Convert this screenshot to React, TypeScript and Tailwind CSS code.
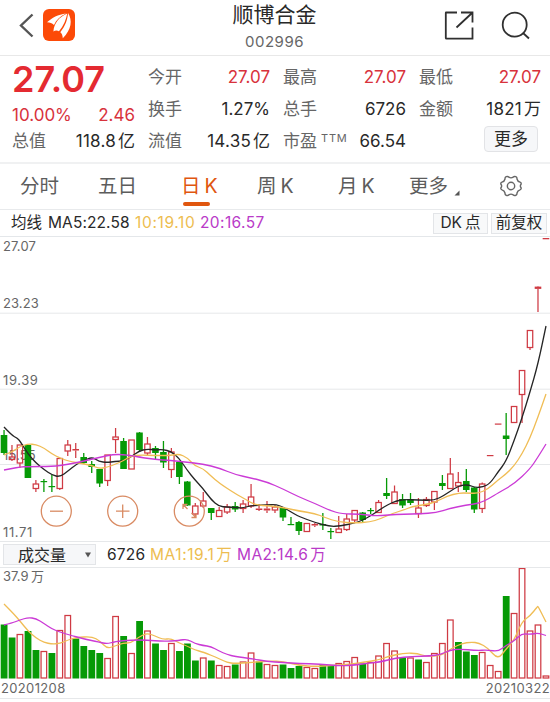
import React from 'react';

type Candle = [number, number, number, number, 'r' | 'g'];

const STEP = 7.97;
const RED = '#cf3a43';
const GREEN = '#069a06';
const px = (i: number) => 4 + i * STEP;

// high, body top, body bottom, low, direction
const candles: Candle[] = [
  [430, 435, 453, 455, 'g'], [445, 457, 459.5, 461, 'r'], [445, 445, 463, 468, 'r'], [445, 445, 478, 478, 'g'],
  [480, 484, 488.5, 492, 'r'], [479, 481, 482, 492, 'g'], [475, 486, 487, 492, 'g'], [458, 458.5, 488.5, 490, 'r'],
  [440, 445, 451, 456, 'r'], [443, 449, 450.5, 458, 'r'], [453, 457, 463, 464, 'g'], [461, 464, 467, 473, 'g'],
  [469, 469, 483.5, 487, 'g'], [455, 455, 480.5, 486, 'r'], [428, 437, 439.5, 453, 'r'], [438, 441, 469, 469, 'g'],
  [440, 440, 469, 469, 'r'], [432, 432.5, 450, 452, 'g'], [437, 444, 453, 455, 'r'], [446, 448, 453, 459, 'g'],
  [441, 452, 462.5, 468, 'g'], [448, 452, 469.5, 478, 'r'], [461, 462, 477, 484, 'g'], [481, 481.5, 505.5, 506, 'g'],
  [503, 506, 514, 518, 'r'], [492, 501, 506, 508, 'r'], [508, 508, 513, 520, 'g'], [507, 510.5, 516.5, 517, 'r'],
  [504, 507, 512, 514, 'r'], [502, 506, 509.5, 512, 'g'], [500, 504, 508.5, 513, 'r'], [484, 497, 506, 508, 'r'],
  [504, 508.5, 510, 511, 'r'], [501, 508.5, 510.5, 513, 'r'], [505, 507, 510, 513, 'r'], [508, 508, 517.5, 521, 'g'],
  [517, 524, 525, 525, 'g'], [521, 522, 531, 535, 'g'], [523, 523.5, 531.5, 532, 'r'], [523, 524, 525.5, 527, 'r'],
  [513, 524, 525.5, 530, 'g'], [528, 531, 532, 539, 'g'], [516, 529, 532.5, 533, 'r'], [514, 519, 529.5, 531, 'r'],
  [510, 510.5, 520, 523, 'r'], [512, 512.5, 520, 522, 'g'], [508, 510, 511, 514, 'g'], [500, 502.5, 512.5, 513, 'r'],
  [478, 493, 496, 499, 'g'], [485.5, 492, 503.5, 504, 'r'], [494, 499, 505.5, 508, 'g'], [493, 499, 503, 505, 'g'],
  [498, 508, 513.5, 518, 'r'], [497, 499.5, 505.5, 507, 'r'], [491, 491.5, 502, 510, 'r'], [475, 483, 486, 490, 'g'],
  [458, 474, 488.5, 489, 'r'], [472, 482.5, 486, 492, 'r'], [469, 481, 490, 492, 'g'], [487, 487.5, 509.5, 513, 'g'],
  [482.5, 484, 508.5, 513, 'r'], [455, 455, 456.2, 456.2, 'r'], [423.5, 423.5, 424.7, 424.7, 'r'], [413, 435.5, 439, 455, 'g'],
  [406, 406.5, 422.5, 423, 'r'], [370, 370.5, 394.5, 423, 'r'], [330, 330.5, 347.5, 350, 'r'], [286, 286.6, 288.9, 312, 'r'],
  [238, 238, 239.3, 239.3, 'r'],
];

const volumeTops = [
  625, 638, 634.5, 631.5, 650.5, 651.5, 653.5, 630.5, 615.5, 639, 646.5, 650.5, 653.5, 658.5, 616.5, 636.5, 653.5, 621.5,
  631, 644, 650.5, 643.5, 651.5, 644, 661, 658, 661, 665.5, 666.5, 665, 662, 653, 662, 664.5, 665.5, 665, 668.5, 666.5,
  667.5, 668.5, 665, 666, 663.5, 661.5, 657.5, 664, 662.5, 656, 643.5, 651, 658, 658, 660, 662.5, 653.5, 643.5, 620,
  642.5, 652, 655.5, 652.5, 665.5, 671.5, 596.5, 613.5, 568.5, 631, 625, 676,
];
const volumeDir = 'ggrgg rgrrg gggrr grgrg grggg rgrrg rrgrr gggrr ggrrr grrrr grgrr rrggg rrrgr rrrr'.replace(/ /g, '');

const ma5: number[][] = [[4, 427], [12, 435.5], [17, 438], [20, 441], [28, 454], [36, 463], [44, 469.5], [52, 475], [60, 477], [68, 471], [76, 464.5], [84, 460.5], [92, 457], [99, 461.5], [107, 462.5], [115, 461.5], [123, 461], [131, 457], [139, 451], [147, 449], [155, 450], [163, 449.5], [171, 451.5], [179, 458], [187, 470], [195, 480], [203, 488.5], [211, 499.5], [219, 506.5], [227, 507], [235, 507.5], [243, 508], [251, 505.5], [267, 505], [276, 504.5], [283, 507], [291, 512], [299, 516.5], [315, 522.5], [330, 526.5], [340, 526], [355, 523], [363, 520], [372, 515], [380, 509.5], [388, 504.5], [396, 501], [404, 499.5], [418, 500], [434, 500.5], [444, 495.5], [455, 488], [462, 485], [469, 485], [475, 487.5], [483, 487], [490, 483.5], [498, 472], [506, 461.5], [514, 441], [522, 418], [530, 392], [538, 364], [546, 326]];
const ma10: number[][] = [[4, 455], [12, 452], [20, 446.5], [28, 444], [36, 444.5], [44, 448], [52, 454], [60, 458], [68, 461], [84, 464], [92, 465.5], [99, 468.5], [107, 467.5], [123, 461], [131, 456], [139, 455], [155, 455.5], [171, 455.5], [179, 454], [187, 457.5], [195, 466], [203, 468.5], [211, 476], [219, 483], [235, 493.5], [245, 499], [255, 505], [270, 506], [283, 507.5], [299, 511], [315, 513.5], [325, 517.5], [338, 522], [355, 523], [370, 522], [380, 519], [392, 513.5], [404, 510], [412, 506.5], [424, 505], [436, 502], [447, 496], [459, 493], [468, 493], [478, 493.5], [488, 489], [498, 480], [506, 474], [514, 466], [522, 454], [530, 438], [538, 417], [546, 394]];
const ma20: number[][] = [[4, 470], [12, 468.5], [20, 467], [28, 466.5], [52, 466.5], [68, 464.5], [84, 461], [99, 457.5], [115, 454], [131, 455.5], [139, 457], [155, 459.5], [171, 460.5], [185, 462], [203, 464], [219, 468], [235, 474.5], [251, 478], [267, 482], [283, 489], [299, 497], [315, 503.5], [330, 510.5], [342, 514], [360, 514], [375, 516], [388, 515], [404, 514], [420, 514], [436, 512.5], [450, 508.5], [466, 505], [479, 503.5], [490, 498], [498, 493], [514, 484], [530, 469], [538, 457], [546, 444]];
const vol5: number[][] = [[4, 604], [12, 612], [20, 621], [28, 631], [36, 638], [44, 642.5], [52, 644], [60, 643.5], [68, 640], [76, 637.5], [92, 636.5], [100, 641], [107, 648.5], [115, 646], [123, 643], [131, 643], [139, 637], [147, 633], [155, 636], [163, 639.5], [171, 638.5], [179, 643], [187, 646], [195, 650], [203, 652], [219, 658.5], [227, 662.5], [235, 663.5], [250, 662.5], [270, 661], [283, 661.5], [300, 665.5], [315, 666.5], [330, 665.5], [350, 664.5], [368, 661.5], [378, 660], [388, 656.5], [404, 653], [418, 653.5], [426, 656.5], [442, 655.5], [452, 648], [462, 643.5], [471, 642], [479, 643], [488, 648], [498, 659.5], [506, 649], [514, 640.5], [522, 621.5], [530, 616], [537.5, 606.5], [538.2, 606.5], [546, 622]];
const vol10: number[][] = [[4, 625], [12, 623], [20, 620], [28, 617.5], [36, 618.5], [44, 623.5], [52, 629], [60, 632], [68, 634.5], [84, 639], [99, 642], [107, 644], [115, 641.5], [131, 640], [147, 640], [163, 641.5], [179, 640.5], [187, 639], [195, 643.5], [203, 645.5], [211, 646.5], [219, 651], [227, 654.5], [235, 656.5], [251, 658.5], [267, 661.5], [283, 662.5], [299, 663.5], [320, 664], [340, 666], [355, 665], [370, 663], [380, 662], [396, 658], [412, 656.5], [430, 656], [441, 654.5], [450, 650], [460, 649], [476, 650.5], [488, 650], [498, 651.5], [506, 645.5], [514, 641], [522, 633.5], [530, 634.5], [538, 633], [546, 635.5]];

// Joins points with quadratic segments through their midpoints.
function curve(p: number[][]) {
  let d = `M${p[0][0]} ${p[0][1]}`;
  for (let i = 1; i < p.length - 1; i++) {
    d += `Q${p[i][0]} ${p[i][1]} ${(p[i][0] + p[i + 1][0]) / 2} ${(p[i][1] + p[i + 1][1]) / 2}`;
  }
  const last = p[p.length - 1];
  return d + `L${last[0]} ${last[1]}`;
}

function Line({ points, color }: { points: number[][]; color: string }) {
  return <path d={curve(points)} fill="none" stroke={color} strokeWidth="1.3" strokeLinejoin="round" />;
}

function CandleMark({ c, i }: { c: Candle; i: number }) {
  const [high, top, bottom, low, dir] = c;
  const x = px(i);
  const h = bottom - top;
  if (dir === 'g') {
    return (
      <g fill={GREEN}>
        <rect x={x - 0.6} y={high} width="1.3" height={low - high} />
        <rect x={x - 3.3} y={top} width="6.6" height={Math.max(h, 1.2)} />
      </g>
    );
  }
  return (
    <g stroke={RED} strokeWidth="1.25" fill="none">
      {top > high && <path d={`M${x} ${high}V${top}`} />}
      {low > bottom && <path d={`M${x} ${bottom}V${low}`} />}
      {h < 2.4 ? <rect x={x - 3.3} y={top} width="6.6" height={h} fill={RED} stroke="none" /> : <rect x={x - 2.7} y={top} width="5.4" height={h} />}
    </g>
  );
}

function PriceChart() {
  return (
    <svg className="block shrink-0" width="550" height="304" viewBox="0 237 550 304">
      <g stroke="#e6e8ea">
        <path d="M0 313.2H550M0 389.2H550M0 464.5H550" />
      </g>
      <g fontSize="13" fill="#666" letterSpacing="0.1">
        <text x="3" y="251">27.07</text>
        <text x="3" y="308">23.23</text>
        <text x="3" y="385" letterSpacing="0.6">19.39</text>
        <text x="3" y="460">15.55</text>
        <text x="3" y="537" letterSpacing="0.6">11.71</text>
      </g>
      {candles.map((c, i) => <CandleMark key={i} c={c} i={i} />)}
      <Line points={ma5} color="#252525" />
      <Line points={ma10} color="#f0bd55" />
      <Line points={ma20} color="#cb3ad6" />
      <g stroke="#d98b63" strokeWidth="1.3" fill="none">
        <circle cx="56.3" cy="511.2" r="15" />
        <path d="M50 511.2H63" />
        <circle cx="122.7" cy="511.2" r="15" />
        <path d="M116 511.2H129.5M122.7 504.5V518" />
        <circle cx="189.3" cy="511.2" r="15" />
        <path d="M183 509V504.5H187.5M183 504.5L187.5 509M196 513V517.5H191.5M196 517.5L191.5 513" />
      </g>
    </svg>
  );
}

function VolumeChart() {
  return (
    <svg className="block shrink-0" width="550" height="112" viewBox="0 568 550 112">
      <text x="3" y="580.5" fontSize="13" fill="#666">37.9<tspan dx="2.5">万</tspan></text>
      {volumeTops.map((top, i) =>
        volumeDir[i] === 'g' ? (
          <rect key={i} x={px(i) - 3.3} y={top - 0.5} width="6.8" height={679 - top} fill={GREEN} />
        ) : (
          <rect key={i} x={px(i) - 2.8} y={top} width="5.6" height={678 - top} fill="none" stroke={RED} strokeWidth="1.25" />
        ),
      )}
      <Line points={vol5} color="#f0bd55" />
      <Line points={vol10} color="#cb3ad6" />
    </svg>
  );
}

function Quote({ label, value, unit, red, sup }: { label: string; value: string; unit?: string; red?: boolean; sup?: string }) {
  return (
    <div className="flex h-8 items-center justify-between">
      <span className="flex whitespace-nowrap text-[17px] text-[#666]">
        {label}
        {sup && <sup className="top-0 ml-1 mt-1 text-[11px] leading-none tracking-[0.8px]">{sup}</sup>}
      </span>
      <span className={`flex items-center gap-[2px] whitespace-nowrap text-[17px] ${red ? 'text-[#d8323c]' : 'text-[#292929]'}`}>
        <span className={unit ? 'tracking-[0.25px]' : ''}>{value}</span>
        {unit && <span className="text-[17px]">{unit}</span>}
      </span>
    </div>
  );
}

function Tab({ cjk, latin, active, className }: { cjk: string; latin?: string; active?: boolean; className: string }) {
  return (
    <div className={`relative flex items-center gap-1 whitespace-nowrap pt-px text-[19.5px] ${active ? 'text-[#e0560f]' : 'text-[#5c5c5c]'} ${className}`}>
      <span>{cjk}</span>
      {latin && <span>{latin}</span>}
      {active && <span className="absolute bottom-[3px] left-[2px] h-1 w-[27px] rounded-full bg-[#e0560f]" />}
    </div>
  );
}

export default function App() {
  return (
    <div className="flex h-[702px] w-[550px] flex-col overflow-hidden bg-white font-[Inter,'Noto_Sans_CJK_SC',sans-serif] text-[#292929]">
      <header className="flex h-14 shrink-0 items-start justify-between border-b border-[#e8e8e8] pl-[18px] pr-5">
        <div className="flex w-[87px] items-center pt-[9px]">
          <svg width="17" height="32" viewBox="18 9 17 32" fill="none" stroke="#555" strokeWidth="2.4"><path d="M32.5 14.5L21 25.5L32.5 36.5" /></svg>
          <svg className="ml-2" width="32" height="32" viewBox="43 9 32 32">
            <rect x="43" y="9" width="32" height="32" rx="6" fill="#fc4a08" />
            <path d="M47 22.3C52 17.5 58 14.6 66 13.4C60 16.2 56 20 54 25C52 23.2 50 22.4 47 22.3Z" fill="#fff" />
            <path d="M53.4 31.4C54 23.5 59 16.8 67.2 13.4C66.4 19 63.6 25.6 59 31.3C57.3 30.2 55.2 30.2 53.4 31.4Z" fill="#fff" />
            <path d="M62.8 38.2C62.6 35.2 61.8 33.4 60.3 32.2C65.4 26 67.6 19.5 68 13C72.6 20 71.7 29.5 62.8 38.2Z" fill="#fff" />
          </svg>
        </div>
        <div className="flex flex-col items-center pt-[2px]">
          <h1 className="text-[21px] leading-[26px]">顺博合金</h1>
          <span className="mt-[5px] text-[15px] leading-[18px] tracking-[0.5px] text-[#666]">002996</span>
        </div>
        <div className="flex w-[86px] justify-between pt-[10px]">
          <svg className="shrink-0" width="30" height="30" viewBox="444 10 30 30" fill="none" stroke="#303030" strokeWidth="1.8">
            <path d="M457 12.5H446Q445.8 12.5 445.8 13V38Q445.8 38.6 446.5 38.6H472.5V27.5M461 12.5H472.5V22.5M472 13L456.5 27.5" />
          </svg>
          <svg className="shrink-0" width="30" height="30" viewBox="500 10 30 30" fill="none" stroke="#303030" strokeWidth="1.8">
            <circle cx="514.7" cy="24.7" r="12" /><path d="M523 33L529 38.5" />
          </svg>
        </div>
      </header>

      <section className="flex h-[108px] shrink-0 border-b-2 border-[#f0f1f2] pl-3 pr-[9px] pt-[5px]">
        <div className="w-[123px]">
          <div className="h-9 text-[36px] font-semibold leading-9 text-[#e42a31]">27.07</div>
          <div className="flex h-[29px] items-center justify-between pt-2 text-[17px] text-[#d8323c]"><span>10.00%</span><span>2.46</span></div>
          <Quote label="总值" value="118.8" unit="亿" />
        </div>
        <div className="ml-[13px] w-[122px] pt-px">
          <Quote label="今开" value="27.07" red />
          <Quote label="换手" value="1.27%" />
          <Quote label="流值" value="14.35" unit="亿" />
        </div>
        <div className="ml-[13px] w-[123px] pt-px">
          <Quote label="最高" value="27.07" red />
          <Quote label="总手" value="6726" />
          <Quote label="市盈" sup="TTM" value="66.54" />
        </div>
        <div className="ml-[13px] w-[122px] pt-px">
          <Quote label="最低" value="27.07" red />
          <Quote label="金额" value="1821" unit="万" />
          <button className="ml-auto mr-[3px] flex h-[26px] w-[54px] items-center justify-center rounded-sm border border-[#e2e3e6] bg-[#f6f7f9] pt-px text-[17px]">更多</button>
        </div>
      </section>

      <nav className="flex h-[46px] shrink-0 items-stretch border-b border-[#e8eaec] pl-5">
        <Tab cjk="分时" className="w-[78px]" />
        <Tab cjk="五日" className="w-[83px]" />
        <Tab cjk="日" latin="K" active className="w-[76px]" />
        <Tab cjk="周" latin="K" className="w-[81px]" />
        <Tab cjk="月" latin="K" className="w-[71px]" />
        <Tab cjk="更多" className="w-[45px]" />
        <svg className="mt-[26px] shrink-0" width="6" height="6" viewBox="0 0 6 6"><path d="M5.5 .5V5.5H.5Z" fill="#555" /></svg>
        <svg className="ml-[39px] mt-[10px] shrink-0" width="24" height="24" viewBox="0 0 24 24" fill="none" stroke="#666" strokeWidth="1.4">
          <path d="M7.2 2.7Q9 2.1 9.8 3.2Q12 4.6 14.2 3.2Q15 2.1 16.8 2.7Q18.2 3.4 18 5Q18.6 7.5 21 8.2Q22.4 8.7 22.2 10Q20.5 12 22.2 14Q22.4 15.3 21 15.8Q18.6 16.5 18 19Q18.2 20.6 16.8 21.3Q15 21.9 14.2 20.8Q12 19.4 9.8 20.8Q9 21.9 7.2 21.3Q5.8 20.6 6 19Q5.4 16.5 3 15.8Q1.6 15.3 1.8 14Q3.5 12 1.8 10Q1.6 8.7 3 8.2Q5.4 7.5 6 5Q5.8 3.4 7.2 2.7Z" />
          <circle cx="12" cy="12" r="3.7" />
        </svg>
      </nav>

      <div className="flex h-[27px] shrink-0 items-center border-b border-[#e4e7ea] pl-[11px] pr-[3px] text-[15.5px] whitespace-nowrap">
        <span className="w-[37px]">均线</span>
        <span className="w-[87px] tracking-[0.1px]">MA5:22.58</span>
        <span className="w-[65px] tracking-[0.65px] text-[#edbd50]">10:19.10</span>
        <span className="tracking-[0.4px] text-[#b93ac8]">20:16.57</span>
        <span className="ml-auto flex h-[21px] w-[55px] items-center justify-center gap-[3px] border border-[#e3e5e8] bg-[#f8f9fa]"><span>DK</span><span>点</span></span>
        <span className="ml-[3px] flex h-[21px] w-[56px] items-center justify-center border border-[#e3e5e8] bg-[#f8f9fa]">前复权</span>
      </div>

      <PriceChart />

      <div className="flex h-[27px] shrink-0 items-center border-y border-[#e6e8ea] pl-[3px] text-[15.5px] whitespace-nowrap">
        <div className="flex h-[21px] w-[93px] items-center justify-between border border-[#e3e5e8] bg-[#f6f7f9] pl-[14px] pr-1">
          <span className="text-[16px]">成交量</span>
          <svg width="6" height="6" viewBox="0 0 6 6"><path d="M0 .5H6L3 5.5Z" fill="#555" /></svg>
        </div>
        <span className="ml-[11px] w-[43px] tracking-[0.2px]">6726</span>
        <span className="flex w-[87px] gap-[2px] text-[#edbd50]"><span className="tracking-[0.55px]">MA1:19.1</span><span>万</span></span>
        <span className="flex gap-[2px] text-[#b93ac8]"><span className="tracking-[0.4px]">MA2:14.6</span><span>万</span></span>
      </div>

      <VolumeChart />

      <div className="flex h-[19px] shrink-0 items-start justify-between border-b border-[#e6e8ea] pl-px text-[13px] leading-4 tracking-[0.35px] text-[#666]">
        <span>20201208</span>
        <span>20210322</span>
      </div>
    </div>
  );
}
